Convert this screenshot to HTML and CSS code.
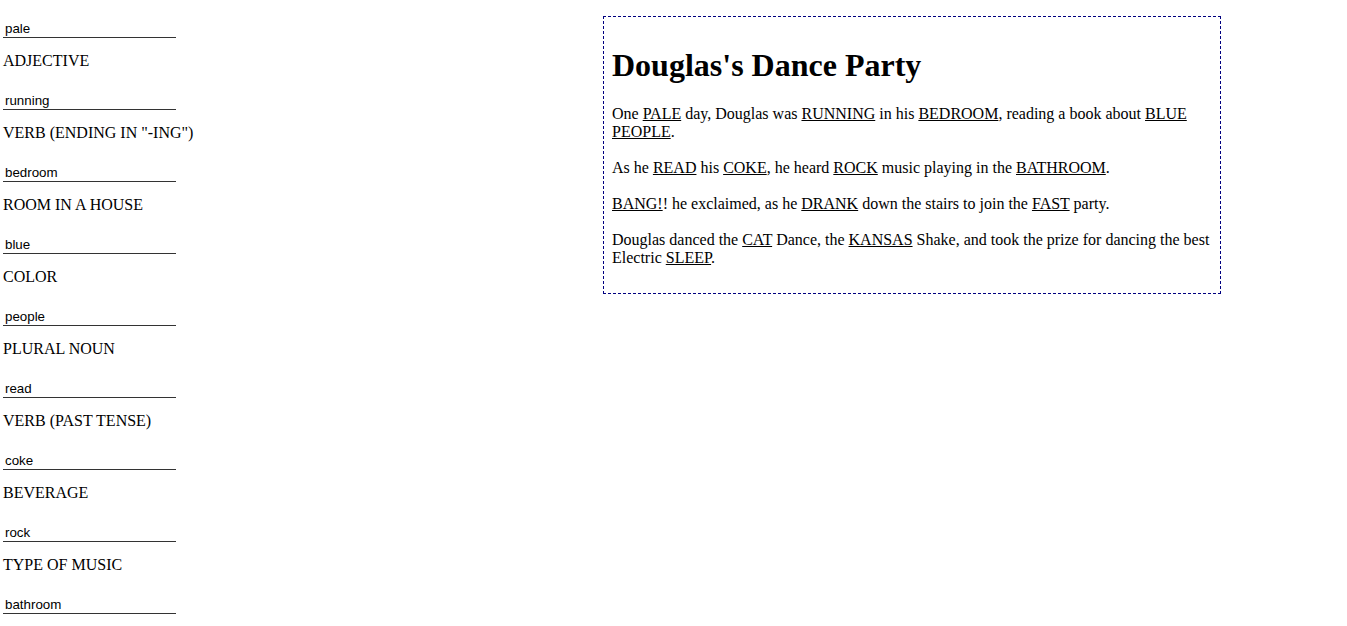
FILE: index.html
```html
<!DOCTYPE html>
<html>
<head>
<meta charset="utf-8">
<title>Mad Libs</title>
<link rel="stylesheet" href="styles.css">
</head>
<body>
<div class="page">
  <form class="words">
    <div class="field"><input class="word" value="pale"><label class="kind">ADJECTIVE</label></div>
    <div class="field"><input class="word" value="running"><label class="kind">VERB (ENDING IN "-ING")</label></div>
    <div class="field"><input class="word" value="bedroom"><label class="kind">ROOM IN A HOUSE</label></div>
    <div class="field"><input class="word" value="blue"><label class="kind">COLOR</label></div>
    <div class="field"><input class="word" value="people"><label class="kind">PLURAL NOUN</label></div>
    <div class="field"><input class="word" value="read"><label class="kind">VERB (PAST TENSE)</label></div>
    <div class="field"><input class="word" value="coke"><label class="kind">BEVERAGE</label></div>
    <div class="field"><input class="word" value="rock"><label class="kind">TYPE OF MUSIC</label></div>
    <div class="field"><input class="word" value="bathroom"><label class="kind">ROOM IN A HOUSE</label></div>
    <div class="field"><input class="word" value="bang!"><label class="kind">EXCLAMATION</label></div>
    <div class="field"><input class="word" value="drank"><label class="kind">VERB (PAST TENSE)</label></div>
    <div class="field"><input class="word" value="fast"><label class="kind">ADJECTIVE</label></div>
    <div class="field"><input class="word" value="cat"><label class="kind">ANIMAL</label></div>
    <div class="field"><input class="word" value="kansas"><label class="kind">STATE</label></div>
    <div class="field"><input class="word" value="sleep"><label class="kind">NOUN</label></div>
  </form>
  <div class="story">
    <h1 class="title">Douglas's Dance Party</h1>
    <p class="para">One <span class="fill">PALE</span> day, Douglas was <span class="fill">RUNNING</span> in his <span class="fill">BEDROOM</span>, reading a book about <span class="fill">BLUE PEOPLE</span>.</p>
    <p class="para">As he <span class="fill">READ</span> his <span class="fill">COKE</span>, he heard <span class="fill">ROCK</span> music playing in the <span class="fill">BATHROOM</span>.</p>
    <p class="para"><span class="fill">BANG!</span>! he exclaimed, as he <span class="fill">DRANK</span> down the stairs to join the <span class="fill">FAST</span> party.</p>
    <p class="para">Douglas danced the <span class="fill">CAT</span> Dance, the <span class="fill">KANSAS</span> Shake, and took the prize for dancing the best Electric <span class="fill">SLEEP</span>.</p>
  </div>
</div>
</body>
</html>
```
FILE: styles.css
```css
html, body {
  margin: 0;
  padding: 0;
  background: #fff;
}
body {
  font-family: "Liberation Serif", "Times New Roman", serif;
  font-size: 16px;
  color: #000;
}
.page {
  display: flex;
  align-items: flex-start;
}
.words {
  box-sizing: border-box;
  width: 603px;
  flex: none;
  padding: 17px 0 0 3px;
  margin: 0;
}
.field {
  display: flex;
  flex-direction: column;
  align-items: flex-start;
}
.word {
  box-sizing: border-box;
  width: 173px;
  height: 21px;
  margin: 0;
  padding: 3px 2px 0 2px;
  border: none;
  border-bottom: 1px solid #333;
  outline: none;
  font-family: "Liberation Sans", Arial, sans-serif;
  font-size: 13.33px;
  color: #000;
  background: transparent;
}
.kind {
  display: block;
  margin: 14px 0 19px;
  line-height: 18px;
}
.story {
  box-sizing: border-box;
  width: 618px;
  flex: none;
  margin-top: 16px;
  padding: 9px 8px 8px;
  border: 1px dashed #000080;
}
.title {
  font-size: 32px;
  font-weight: bold;
  margin: 21px 0;
}
.para {
  margin: 18px 0;
  line-height: 18px;
}
.fill {
  text-decoration: underline;
}
```
